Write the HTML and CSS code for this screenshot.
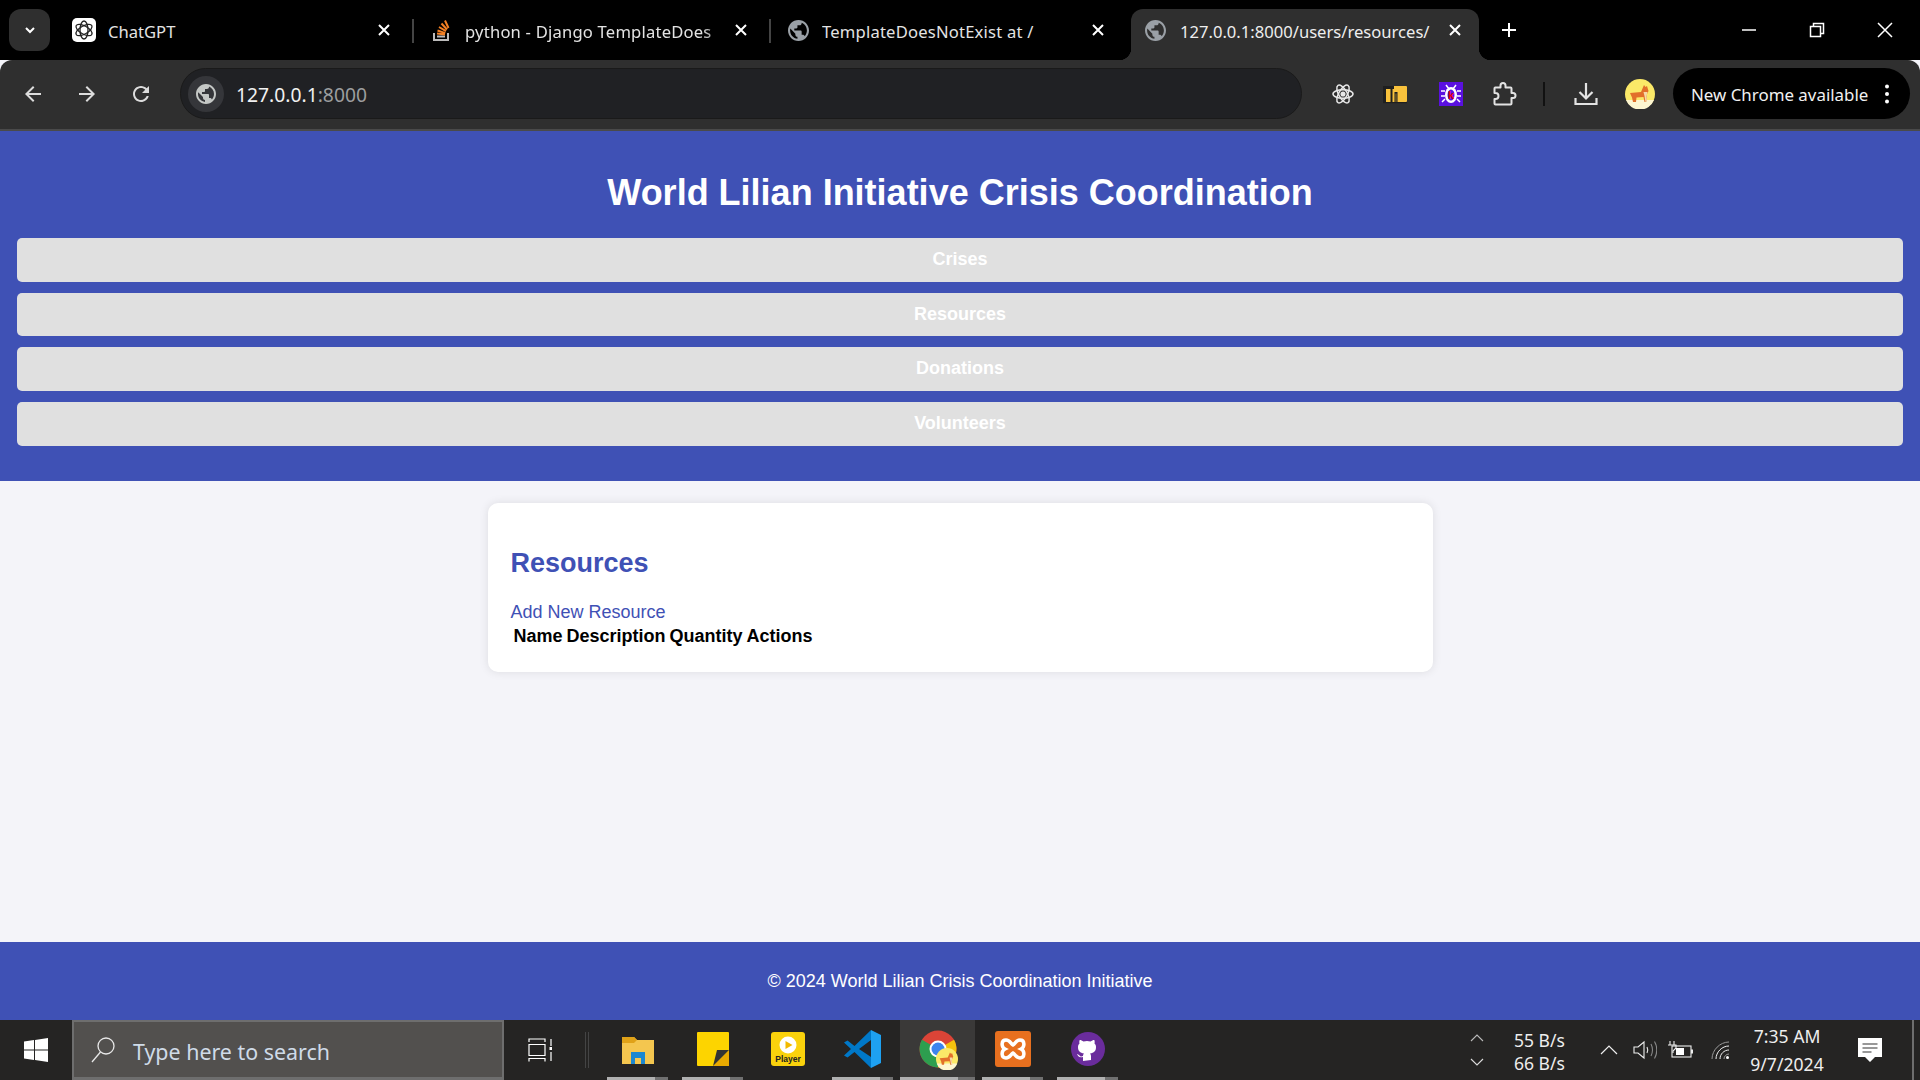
FILE: index.html
```html
<!DOCTYPE html>
<html lang="en">
<head>
    <meta charset="UTF-8">
    <meta name="viewport" content="width=device-width, initial-scale=1.0">
    <title>World Lilian Initiative Crisis Coordination</title>
    <link rel="stylesheet" href="styles.css">
</head>
<body>
    <svg class="icon-defs" width="0" height="0">
        <symbol id="globe" viewBox="2 2 20 20">
            <path d="M12 2C6.48 2 2 6.48 2 12s4.48 10 10 10 10-4.48 10-10S17.52 2 12 2zm-1 17.93c-3.95-.49-7-3.85-7-7.93 0-.62.08-1.21.21-1.79L9 15v1c0 1.1.9 2 2 2v1.93zm6.9-2.54c-.26-.81-1-1.39-1.9-1.39h-1v-3c0-.55-.45-1-1-1H8v-2h2c.55 0 1-.45 1-1V7h2c1.1 0 2-.9 2-2v-.41c2.93 1.19 5 4.06 5 7.41 0 2.08-.8 3.97-2.1 5.39z"/>
        </symbol>
        <symbol id="close" viewBox="0 0 14 14">
            <path d="M2 2l10 10M12 2L2 12" stroke="currentColor" stroke-width="2" fill="none"/>
        </symbol>
        <symbol id="corgi" viewBox="0 0 30 30">
            <circle cx="15" cy="15" r="15" fill="#fbe968"/>
            <path d="M1 21h28a15 15 0 0 1-28 0z" fill="#fdf6d0"/>
            <path d="M5 14l11-1 3-7 1.500 2 1.500-1 1.500 5-2 4 .5 7h-2.500l-1-5-7 .5-.5 4.500H8l-1-4.500z" fill="#e2702a"/>
            <path d="M18.500 13h4l-1 4 .5 6h-1.500l-1-6z" fill="#f6d9a8"/>
        </symbol>
    </svg>

    <!-- browser chrome -->
    <div class="tabstrip">
        <button class="tab-switcher">
            <svg width="14" height="14" viewBox="0 0 14 14"><path d="M3 5l4 4 4-4" stroke="#fff" stroke-width="2" fill="none"/></svg>
        </button>
        <div class="tab tab-chat">
            <svg class="tab-icon" viewBox="0 0 24 24">
                <rect width="24" height="24" rx="5" fill="#fff"/>
                <g fill="none" stroke="#222" stroke-width="1.300">
                    <ellipse cx="12" cy="12" rx="4" ry="9"/>
                    <ellipse cx="12" cy="12" rx="4" ry="9" transform="rotate(60 12 12)"/>
                    <ellipse cx="12" cy="12" rx="4" ry="9" transform="rotate(120 12 12)"/>
                </g>
            </svg>
            <span class="tab-title">ChatGPT</span>
            <svg class="tab-close"><use href="#close"/></svg>
        </div>
        <span class="tab-sep"></span>
        <div class="tab tab-so">
            <svg class="tab-icon" viewBox="0 0 24 24">
                <path d="M5 15v7h14v-7" fill="none" stroke="#bcbbbb" stroke-width="2"/>
                <path d="M8 18.500h8" stroke="#bcbbbb" stroke-width="2"/>
                <path d="M8 15.500l8 1M8.500 12.500l7.800 2.600M10 9l7 4.200M12.500 5.500l5.500 6M16 2.500l3.500 7.500" stroke="#f48024" stroke-width="2"/>
            </svg>
            <span class="tab-title tab-title-fade">python - Django TemplateDoes</span>
            <svg class="tab-close"><use href="#close"/></svg>
        </div>
        <span class="tab-sep"></span>
        <div class="tab tab-debug">
            <svg class="tab-icon globe"><use href="#globe"/></svg>
            <span class="tab-title">TemplateDoesNotExist at /</span>
            <svg class="tab-close"><use href="#close"/></svg>
        </div>
        <div class="tab tab-active">
            <svg class="tab-icon globe"><use href="#globe"/></svg>
            <span class="tab-title">127.0.0.1:8000/users/resources/</span>
            <svg class="tab-close"><use href="#close"/></svg>
        </div>
        <svg class="new-tab" viewBox="0 0 16 16"><path d="M8 1v14M1 8h14" stroke="#fff" stroke-width="2"/></svg>
        <div class="window-controls">
            <svg viewBox="0 0 16 16"><path d="M1 8h14" stroke="#fff" stroke-width="1.500"/></svg>
            <svg viewBox="0 0 16 16"><path d="M1.500 4.500h10v10h-10zM4.500 4.500v-3h10v10h-3" fill="none" stroke="#fff" stroke-width="1.500"/></svg>
            <svg viewBox="0 0 16 16"><path d="M1 1l14 14M15 1L1 15" stroke="#fff" stroke-width="1.500"/></svg>
        </div>
    </div>

    <div class="toolbar">
        <svg class="nav-icon" viewBox="0 0 24 24"><path d="M20 11H7.830l5.590-5.590L12 4l-8 8 8 8 1.410-1.410L7.830 13H20v-2z"/></svg>
        <svg class="nav-icon" viewBox="0 0 24 24"><path d="M12 4l-1.410 1.410L16.170 11H4v2h12.170l-5.580 5.590L12 20l8-8z"/></svg>
        <svg class="nav-icon" viewBox="0 0 24 24"><path d="M17.650 6.350C16.200 4.900 14.210 4 12 4c-4.420 0-7.990 3.580-7.990 8s3.570 8 7.990 8c3.730 0 6.840-2.550 7.730-6h-2.080c-.82 2.330-3.040 4-5.650 4-3.310 0-6-2.690-6-6s2.690-6 6-6c1.660 0 3.140.69 4.220 1.780L13 11h7V4l-2.350 2.350z"/></svg>
        <div class="omnibox">
            <span class="site-chip"><svg class="chip-globe"><use href="#globe"/></svg></span>
            <span class="url">127.0.0.1<span class="url-port">:8000</span></span>
        </div>
        <div class="ext-icons">
            <svg viewBox="0 0 24 24" fill="none" stroke="#e8e8e8" stroke-width="1.500">
                <ellipse cx="12" cy="12" rx="10" ry="4.200"/>
                <ellipse cx="12" cy="12" rx="10" ry="4.200" transform="rotate(60 12 12)"/>
                <ellipse cx="12" cy="12" rx="10" ry="4.200" transform="rotate(120 12 12)"/>
                <circle cx="12" cy="12" r="1.800" fill="#e8e8e8"/>
            </svg>
            <svg class="ext-folder" viewBox="0 0 24 24">
                <rect x="0" y="4" width="24" height="16" rx="1" fill="#f9c23c"/>
                <path d="M0 4h11v3h-1.500v13h-2V7H3v13H0z" fill="#1f1f1f"/>
                <path d="M11.500 10h3v10h-1.200v-8.500h-.6V20h-1.200z" fill="#1f1f1f"/>
                <rect x="0" y="20" width="24" height="1.200" fill="#1f1f1f"/>
            </svg>
            <svg viewBox="0 0 24 24">
                <rect width="24" height="24" fill="#5a10e0"/>
                <ellipse cx="12" cy="13" rx="6" ry="8" fill="#fff"/>
                <path d="M7 3l3 4M17 3l-3 4M2 9h4M18 9h4M2 14h4M18 14h4M3 20l3-3M21 20l-3-3" stroke="#fff" stroke-width="1.500"/>
                <ellipse cx="12" cy="13" rx="3.500" ry="5.500" fill="#5a10e0"/>
                <text x="12" y="17" class="bug-letter">k</text>
            </svg>
            <svg class="puzzle" viewBox="0 0 24 24"><path d="M2 5.500h5.500V3.500a2.500 2.500 0 0 1 5 0v2h5a1 1 0 0 1 1 1V11h1.500a2.500 2.500 0 0 1 0 5H18.500v5.500a1 1 0 0 1-1 1H2.500a1 1 0 0 1-1-1V17h1a3 3 0 0 0 0-6h-1V6.500a1 1 0 0 1 .5-1z" fill="none" stroke="#e3e3e3" stroke-width="2" stroke-linejoin="round"/></svg>
        </div>
        <span class="toolbar-sep"></span>
        <svg class="download" viewBox="0 0 24 24"><path d="M12 1v15M5.500 10l6.500 6.500 6.500-6.500M1.500 16v6h21v-6" fill="none" stroke="#e3e3e3" stroke-width="2.200"/></svg>
        <svg class="avatar"><use href="#corgi"/></svg>
        <div class="update-pill">
            <span class="update-label">New Chrome available</span>
            <svg width="4" height="20" viewBox="0 0 4 20"><circle cx="2" cy="2.500" r="2" fill="#fff"/><circle cx="2" cy="10" r="2" fill="#fff"/><circle cx="2" cy="17.500" r="2" fill="#fff"/></svg>
        </div>
    </div>

    <!-- the page itself -->
    <header class="site-header">
        <h1>World Lilian Initiative Crisis Coordination</h1>
        <nav class="site-nav">
            <a href="#">Crises</a>
            <a href="#">Resources</a>
            <a href="#">Donations</a>
            <a href="#">Volunteers</a>
        </nav>
    </header>

    <main class="site-main">
        <section class="card">
            <h2>Resources</h2>
            <a class="card-link" href="#">Add New Resource</a>
            <table>
                <thead>
                    <tr>
                        <th>Name</th>
                        <th>Description</th>
                        <th>Quantity</th>
                        <th>Actions</th>
                    </tr>
                </thead>
            </table>
        </section>
    </main>

    <footer class="site-footer">© 2024 World Lilian Crisis Coordination Initiative</footer>

    <!-- windows taskbar -->
    <div class="taskbar">
        <div class="start">
            <svg width="24" height="24" viewBox="0 0 24 24"><path d="M0 3.500l10-1.400v9.300H0zM11 2l13-2v11.400H11zM0 12.500h10v9.400L0 20.500zM11 12.500h13V24l-13-2z" fill="#fff"/></svg>
        </div>
        <div class="search-box">
            <svg width="24" height="26" viewBox="0 0 24 26" fill="none" stroke="#e8e8e8" stroke-width="1.300"><circle cx="15" cy="9" r="8"/><path d="M9.500 15L1 25"/></svg>
            <span>Type here to search</span>
        </div>
        <div class="task-view">
            <svg width="24" height="24" viewBox="0 0 24 24" fill="none" stroke="#fff" stroke-width="1.200"><path d="M1 4V1h16v3M1 6.500h16v11H1zM1 23.500v-3h16v3M23 1v7M23 14v9"/><rect x="21.500" y="9" width="3" height="3" fill="#fff" stroke="none"/></svg>
        </div>
        <span class="task-divider"></span>
        <div class="task-apps">
            <div class="task-app running">
                <svg width="34" height="30" viewBox="0 0 34 30">
                    <path d="M1 3h12l3 3h17v24H1z" fill="#f4c64f"/>
                    <path d="M1 3h12l3 3-3 3H1z" fill="#e0a218"/>
                    <path d="M10 30V18h14v12h-4v-6h-6v6z" fill="#1b87d0"/>
                </svg>
            </div>
            <div class="task-app running">
                <svg width="32" height="34" viewBox="0 0 32 34">
                    <rect width="32" height="34" rx="1" fill="#fdd400"/>
                    <path d="M16 34l16-16v16z" fill="#e9aa00"/>
                    <path d="M16 34l4-16h12z" fill="#333"/>
                </svg>
            </div>
            <div class="task-app">
                <svg width="34" height="34" viewBox="0 0 34 34">
                    <rect width="34" height="34" rx="3" fill="#fad20c"/>
                    <circle cx="17" cy="13" r="8.500" fill="#fff"/>
                    <path d="M14.500 9l7 4-7 4z" fill="#f2b900"/>
                    <text x="17" y="30" class="player-label">Player</text>
                </svg>
            </div>
            <div class="task-app running">
                <svg width="37" height="38" viewBox="0 0 37 38">
                    <path d="M27 0l10 5v28l-10 5z" fill="#1ea1f1"/>
                    <path d="M27 0L10.500 16 3.500 10.500 0 12.500 7 19 0 25.500 3.500 27.500 10.500 22 27 38V27L15 19 27 10z" fill="#0078c8"/>
                </svg>
            </div>
            <div class="task-app active">
                <svg width="38" height="38" viewBox="0 0 38 38">
                    <circle cx="19" cy="19" r="18.500" fill="#db4437"/>
                    <path d="M19 19L35 9.800A18.500 18.500 0 0 1 19 37.500z" fill="#f4c20d"/>
                    <path d="M19 19v18.500A18.500 18.500 0 0 1 3 9.800z" fill="#2d9e4f"/>
                    <circle cx="19" cy="19" r="8.500" fill="#fff"/>
                    <circle cx="19" cy="19" r="6.500" fill="#3d84ee"/>
                </svg>
                <svg class="chrome-badge"><use href="#corgi"/></svg>
            </div>
            <div class="task-app running">
                <svg width="36" height="36" viewBox="0 0 36 36">
                    <rect width="36" height="36" rx="3" fill="#e8701f"/>
                    <path d="M11 9c-5 0-5 7-1 9-4 2-4 9 1 9 4 0 5-4 7-5 2 1 3 5 7 5 5 0 5-7 1-9 4-2 4-9-1-9-4 0-5 4-7 5-2-1-3-5-7-5z" fill="none" stroke="#fff" stroke-width="3.500"/>
                </svg>
            </div>
            <div class="task-app running">
                <svg width="34" height="34" viewBox="0 0 34 34">
                    <circle cx="17" cy="17" r="17" fill="#6a2c9c"/>
                    <path d="M12 29v-4c-4 1-5-1-6-3 1 0 2 1 3 2 1 .8 2 .5 3 0 0-1 .5-2 1-2.500-4-.5-6-2.500-6-6.500 0-1.500.5-2.500 1.500-3.500-.3-1-.3-2.300.2-3.500 1.300 0 2.500.6 3.800 1.500a13 13 0 0 1 7 0c1.300-.9 2.500-1.500 3.800-1.500.5 1.200.5 2.500.2 3.500 1 1 1.500 2 1.500 3.500 0 4-2 6-6 6.500.6.600 1 1.500 1 3v3.500z" fill="#fff"/>
                </svg>
            </div>
        </div>
        <div class="tray">
            <div class="net-arrows">
                <svg width="14" height="8" viewBox="0 0 14 8"><path d="M1 7l6-6 6 6" fill="none" stroke="#bbb" stroke-width="1.100"/></svg>
                <svg width="14" height="8" viewBox="0 0 14 8"><path d="M1 1l6 6 6-6" fill="none" stroke="#ddd" stroke-width="1.100"/></svg>
            </div>
            <div class="net-speed"><span>55 B/s</span><span>66 B/s</span></div>
            <svg class="tray-up" width="18" height="10" viewBox="0 0 18 10"><path d="M1 9l8-8 8 8" fill="none" stroke="#eee" stroke-width="1.200"/></svg>
            <svg class="tray-sound" width="24" height="20" viewBox="0 0 24 20" fill="none" stroke="#eee" stroke-width="1.100"><path d="M1 7h4l6-5v16l-6-5H1z"/><path d="M14 7c1 2 1 4 0 6"/><path d="M18 4c2 4 2 8 0 12M21.500 1.500c3 5 3 12 0 17" stroke="#888"/></svg>
            <svg class="tray-battery" width="25" height="18" viewBox="0 0 25 18" fill="none" stroke="#eee" stroke-width="1.100"><rect x="4" y="5" width="19" height="11"/><rect x="23" y="8.500" width="2" height="4" fill="#eee" stroke="none"/><rect x="8" y="7" width="8" height="7" fill="#fff" stroke="none"/><path d="M2 0v4M6 0v4M0 4h8v3l-3 3v2"/></svg>
            <svg class="tray-wifi" width="19" height="19" viewBox="0 0 19 19" fill="none" stroke="#eee" stroke-width="1"><path d="M1 18C1 9 9 1 18 1" stroke="#999"/><path d="M5 18c0-7 6-13 13-13"/><path d="M9 18c0-5 4-9 9-9"/><path d="M13 18c0-2.500 2-5 5-5" stroke="#999"/><circle cx="16.500" cy="16.500" r="1.500" fill="#fff" stroke="none"/></svg>
            <div class="clock"><span>7:35 AM</span><span>9/7/2024</span></div>
            <svg class="tray-notes" width="24" height="24" viewBox="0 0 24 24"><path d="M0 0h24v19h-7l-5 5-5-5H0z" fill="#fff"/><path d="M4.500 6h15M4.500 10h15M4.500 14h9" stroke="#333" stroke-width="1.100"/></svg>
            <span class="show-desktop"></span>
        </div>
    </div>
</body>
</html>
```

FILE: styles.css
```css
* {
    box-sizing: border-box;
}
html, body {
    height: 100%;
}
body {
    margin: 0;
    height: 100vh;
    overflow: hidden;
    display: flex;
    flex-direction: column;
    background-color: #f4f4f9;
    font-family: "Liberation Sans", Arial, sans-serif;
}
.icon-defs {
    position: absolute;
}

/* tab strip */
.tabstrip {
    height: 60px;
    flex: none;
    display: flex;
    align-items: flex-end;
    padding-left: 9px;
    background-color: #000;
    font-family: "Noto Sans", sans-serif;
    color: #e3e3e3;
    font-size: 16.600px;
}
.tab-switcher {
    width: 41px;
    height: 42px;
    margin: 0 8px 9px 0;
    padding: 0;
    display: flex;
    align-items: center;
    justify-content: center;
    border: none;
    border-radius: 12px;
    background-color: #2f2f2f;
}
.tab {
    height: 51px;
    display: flex;
    align-items: center;
    padding-bottom: 9px;
    position: relative;
}
.tab-icon {
    width: 24px;
    height: 24px;
    flex: none;
}
.tab-icon.globe {
    width: 21px;
    height: 21px;
    fill: #9aa0a6;
}
.tab-title {
    flex: 1;
    padding-top: 2px;
    overflow: hidden;
    white-space: nowrap;
    min-width: 0;
}
.tab-title-fade {
    -webkit-mask-image: linear-gradient(to right, #000 88%, transparent 100%);
    mask-image: linear-gradient(to right, #000 88%, transparent 100%);
}
.tab-close {
    width: 14px;
    height: 14px;
    flex: none;
    color: #fff;
}
.tab-chat {
    width: 354px;
    padding-left: 14px;
    padding-right: 21px;
}
.tab-chat .tab-title {
    margin-left: 12px;
}
.tab-so {
    width: 355px;
    padding-left: 15px;
    padding-right: 21px;
    letter-spacing: 0.2px;
}
.tab-so .tab-title {
    margin-left: 12px;
}
.tab-debug {
    width: 360px;
    padding-left: 17px;
    padding-right: 26px;
    letter-spacing: 0.2px;
}
.tab-debug .tab-title {
    margin-left: 13px;
}
.tab-active {
    width: 348px;
    padding-left: 14px;
    padding-right: 17px;
    background-color: #2f2f2f;
    border-radius: 12px 12px 0 0;
    color: #eee;
}
.tab-active .tab-title {
    margin-left: 14px;
}
.tab-active::before,
.tab-active::after {
    content: "";
    position: absolute;
    bottom: 0;
    width: 12px;
    height: 12px;
}
.tab-active::before {
    left: -12px;
    background: radial-gradient(circle at 0 0, transparent 12px, #2f2f2f 12.500px);
}
.tab-active::after {
    right: -12px;
    background: radial-gradient(circle at 100% 0, transparent 12px, #2f2f2f 12.500px);
}
.tab-sep {
    width: 2px;
    height: 24px;
    margin-bottom: 17px;
    flex: none;
    background-color: #444;
}
.new-tab {
    width: 16px;
    height: 16px;
    margin: 0 0 22px 22px;
    flex: none;
}
.window-controls {
    margin-left: auto;
    margin-bottom: 22px;
    padding-right: 27px;
    display: flex;
    gap: 52px;
}
.window-controls svg {
    width: 16px;
    height: 16px;
    display: block;
}

/* address bar row */
.toolbar {
    height: 71px;
    flex: none;
    display: flex;
    align-items: center;
    padding: 0 10px 2px 21px;
    background-color: #2f2f2f;
    border-bottom: 2px solid #4a4a4a;
    border-radius: 12px 12px 0 0;
    font-family: "Noto Sans", sans-serif;
}
.nav-icon {
    width: 24px;
    height: 24px;
    margin-right: 30px;
    fill: #dcdcdc;
    flex: none;
}
.nav-icon:nth-child(3) {
    margin-right: 0;
}
.omnibox {
    width: 1122px;
    height: 51px;
    margin-left: 27px;
    display: flex;
    align-items: center;
    padding-left: 7px;
    border: 1px solid #1a1a1a;
    border-radius: 26px;
    background-color: #202124;
    flex: none;
}
.site-chip {
    width: 36px;
    height: 36px;
    flex: none;
    display: flex;
    align-items: center;
    justify-content: center;
    border-radius: 50%;
    background-color: #35363a;
}
.chip-globe {
    width: 20px;
    height: 20px;
    fill: #c4c7c5;
}
.url {
    margin-left: 12px;
    padding-top: 2px;
    color: #f1f1f1;
    font-size: 19.300px;
}
.url-port {
    color: #9c9e9f;
}
.ext-icons {
    display: flex;
    margin-left: 29px;
    gap: 30px;
}
.ext-icons svg {
    width: 24px;
    height: 24px;
    display: block;
    flex: none;
}
.ext-icons .ext-folder {
    margin: 0 2px 0 -2px;
}
.bug-letter {
    font: bold 11px "Liberation Sans", sans-serif;
    fill: #e00;
    text-anchor: middle;
}
.toolbar-sep {
    width: 2px;
    height: 24px;
    margin-left: 26px;
    background-color: #111;
    flex: none;
}
.download {
    width: 24px;
    height: 24px;
    margin-left: 29px;
    flex: none;
}
.avatar {
    width: 30px;
    height: 30px;
    margin-left: 27px;
    flex: none;
}
.update-pill {
    width: 237px;
    height: 51px;
    margin-left: 18px;
    padding: 0 21px 0 18px;
    display: flex;
    align-items: center;
    justify-content: space-between;
    border-radius: 26px;
    background-color: #000;
    color: #f1f1f1;
    font-size: 16.900px;
    white-space: nowrap;
    flex: none;
}
.update-label {
    padding-top: 2px;
}

/* site */
.site-header {
    height: 350px;
    flex: none;
    padding: 36px 17px 0;
    background-color: #3f51b5;
    color: #fff;
    text-align: center;
}
.site-header h1 {
    margin: 0 0 19px;
    font-size: 36px;
    line-height: 52px;
}
.site-nav {
    display: flex;
    flex-direction: column;
    gap: 11px;
}
.site-nav a {
    height: 43.700px;
    line-height: 43px;
    border-radius: 5px;
    background-color: #e0e0e0;
    color: #fff;
    font-size: 18px;
    font-weight: bold;
    text-decoration: none;
}
.site-main {
    flex: 1;
    padding-top: 22px;
}
.card {
    width: 945px;
    height: 169px;
    margin: 0 auto;
    padding: 22px 23px;
    border-radius: 10px;
    background-color: #fff;
    box-shadow: 0 0 10px rgba(0, 0, 0, 0.1);
}
.card h2 {
    margin: 22px 0 23px;
    color: #3f51b5;
    font-size: 27px;
    line-height: 32px;
}
.card-link {
    display: block;
    color: #3f51b5;
    font-size: 18px;
    line-height: 21px;
    text-decoration: none;
}
.card table {
    font-size: 18px;
    color: #000;
}
.card th {
    line-height: 20px;
}
.site-footer {
    height: 78px;
    flex: none;
    display: flex;
    align-items: center;
    justify-content: center;
    background-color: #3f51b5;
    color: #fff;
    font-size: 18px;
}

/* taskbar */
.taskbar {
    height: 60px;
    flex: none;
    display: flex;
    align-items: stretch;
    background-color: #252423;
    color: #eee;
    font-family: "Noto Sans", sans-serif;
}
.start {
    width: 72px;
    display: flex;
    align-items: center;
    justify-content: center;
}
.search-box {
    width: 432px;
    display: flex;
    align-items: center;
    gap: 18px;
    padding-left: 17px;
    border: 2px solid #6e6e6e;
    border-bottom-width: 3px;
    background-color: #52504e;
    color: #cfdbe8;
    font-size: 21.400px;
}
.search-box span {
    padding-top: 4px;
}
.task-view {
    width: 73px;
    display: flex;
    align-items: center;
    padding-left: 24px;
}
.task-divider {
    width: 4px;
    height: 36px;
    margin: 12px 0 0 8px;
    border-left: 1px solid #444;
    border-right: 1px solid #444;
}
.task-apps {
    margin-left: 11px;
    display: flex;
}
.task-app {
    width: 75px;
    display: flex;
    align-items: center;
    justify-content: center;
    position: relative;
    padding-bottom: 3px;
}
.task-app.running::after,
.task-app.active::after {
    content: "";
    position: absolute;
    left: 7px;
    right: 7px;
    bottom: 0;
    height: 3px;
    background: linear-gradient(to right, #b0b0b0 78%, #707070 78%);
}
.task-app.active {
    background-color: #3a3938;
}
.task-app.active::after {
    left: 0;
    right: 0;
}
.chrome-badge {
    position: absolute;
    right: 17px;
    bottom: 10px;
    width: 22px;
    height: 22px;
}
.player-label {
    font: bold 8.500px "Liberation Sans", sans-serif;
    fill: #222;
    text-anchor: middle;
}
.tray {
    margin-left: auto;
    display: flex;
    align-items: center;
}
.net-arrows {
    display: flex;
    flex-direction: column;
    gap: 16px;
    margin-right: 30px;
}
.net-arrows svg {
    display: block;
}
.net-speed {
    display: flex;
    flex-direction: column;
    width: 52px;
    margin-right: 34px;
    padding-top: 3px;
    font-size: 17.500px;
    line-height: 23px;
    white-space: nowrap;
}
.tray-up {
    margin-right: 15px;
}
.tray-sound {
    margin-right: 11px;
}
.tray-battery {
    margin-right: 18px;
}
.tray-wifi {
    margin-right: 17px;
}
.clock {
    width: 80px;
    display: flex;
    flex-direction: column;
    align-items: center;
    margin-right: 31px;
    font-size: 17.600px;
    line-height: 28px;
    white-space: nowrap;
}
.tray-notes {
    margin-right: 30px;
}
.show-desktop {
    width: 2px;
    height: 100%;
    margin-right: 6px;
    background-color: #6e6e6e;
}
```
